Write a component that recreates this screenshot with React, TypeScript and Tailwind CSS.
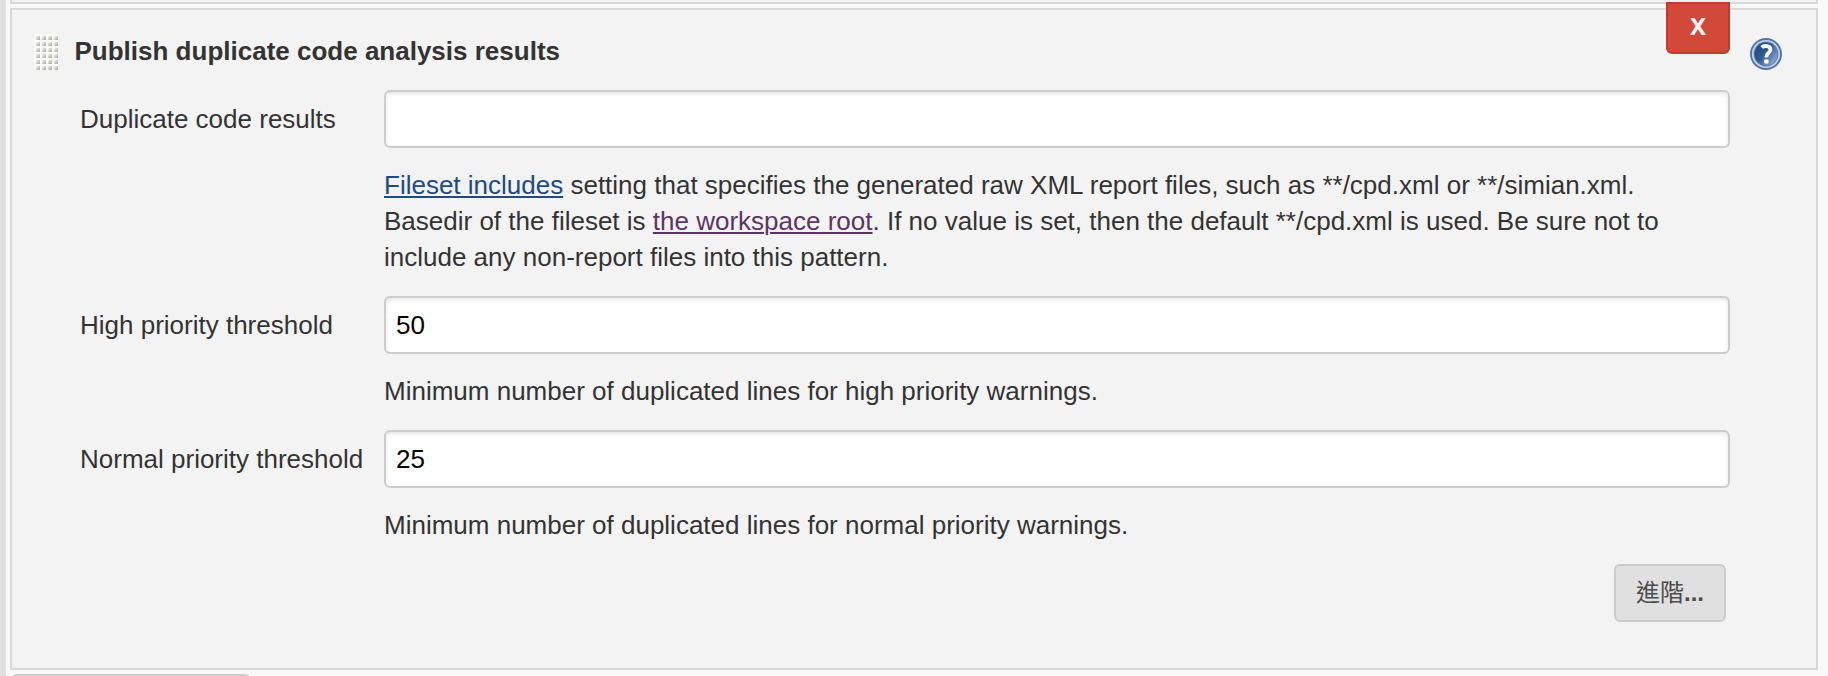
import type { ReactNode } from "react";

function DragHandle() {
  const cells = Array.from({ length: 24 }, (_, i) => ({ x: (i % 4) * 6, y: Math.floor(i / 4) * 6 }));
  return (
    <svg width="24" height="36" viewBox="0 0 24 36" className="shrink-0">
      <defs>
        <linearGradient id="grip" x1="0" y1="0" x2="1" y2="1">
          <stop offset="0.1" stopColor="#f0f0ee" />
          <stop offset="0.5" stopColor="#d0d0cb" />
          <stop offset="1" stopColor="#a8a8a1" />
        </linearGradient>
      </defs>
      <rect width="24" height="36" fill="#fbfbfb" />
      {cells.map((c) => (
        <rect key={`${c.x}-${c.y}`} x={c.x + 1.8} y={c.y + 1.8} width="4.2" height="4.2" fill="url(#grip)" />
      ))}
    </svg>
  );
}

function HelpIcon() {
  return (
    <svg width="32" height="32" viewBox="0 0 32 32">
      <defs>
        <linearGradient id="help" x1="0.1" y1="0.2" x2="0.9" y2="0.85">
          <stop offset="0" stopColor="#204a87" />
          <stop offset="0.4" stopColor="#30588f" />
          <stop offset="1" stopColor="#86a8d4" />
        </linearGradient>
      </defs>
      <circle cx="16" cy="16" r="16" fill="#5575a8" />
      <circle cx="16" cy="16" r="14.1" fill="#c3d1e6" />
      <circle cx="16" cy="16" r="12.4" fill="#5f80b0" />
      <circle cx="16" cy="16" r="11.4" fill="url(#help)" />
      <path
        d="M11.6 9.4C13.6 7.6 20.4 6.8 20.4 11.6C20.4 15.2 16.2 14.8 16.2 19.6"
        fill="none"
        stroke="#fff"
        strokeWidth="3.8"
      />
      <rect x="14.1" y="21.4" width="4.4" height="4.2" rx="0.8" fill="#fff" />
    </svg>
  );
}

function Field({ label, value, children }: { label: string; value: string; children: ReactNode }) {
  return (
    <>
      <label className="pt-[11px] leading-9">{label}</label>
      <div className="mb-[21px]">
        <input
          type="text"
          defaultValue={value}
          aria-label={label}
          className="block h-[58px] w-full rounded-[6px] border-2 border-[#ccc] bg-white px-2.5 text-[26px] text-black shadow-[inset_0_2px_4px_rgba(0,0,0,0.1)] outline-none"
        />
        <div className="mt-[19px] leading-9 whitespace-nowrap">{children}</div>
      </div>
    </>
  );
}

export default function App() {
  return (
    <div className="flex h-[676px] w-[1828px] overflow-hidden bg-[#f9f9f9] font-['Liberation_Sans','Noto_Sans_CJK_TC',sans-serif] text-[26px] text-[#333]">
      <div className="w-1.5 shrink-0 bg-[#e0e0e0]" />
      <main className="ml-1 w-[1808px]">
        <div className="h-1 border-x-2 border-b-2 border-[#d9d9d9] bg-[#f3f3f3]" />
        <section className="relative mt-1 h-[662px] border-2 border-[#d9d9d9] bg-[#f3f3f3] pt-6 pl-[22px]">
          <header className="flex h-9 gap-[16.5px]">
            <DragHandle />
            <h2 className="leading-[34px] font-bold">Publish duplicate code analysis results</h2>
          </header>
          <button className="absolute -top-2 left-[1654px] h-[52px] w-16 rounded-b-[6px] border-2 border-[#c03a2c] bg-[#d24939] pb-1 font-['Noto_Sans',sans-serif] text-[24px] leading-none font-bold text-[#f2f2f2]">
            X
          </button>
          <button aria-label="Help" className="absolute top-7 left-[1738px]">
            <HelpIcon />
          </button>
          <div className="mt-5 ml-[46px] grid grid-cols-[304px_1346px]">
            <Field label="Duplicate code results" value="">
              <a className="text-[#204a87] underline decoration-2 underline-offset-[2px]">Fileset includes</a> setting that
              specifies the generated raw XML report files, such as **/cpd.xml or **/simian.xml.
              <br />
              Basedir of the fileset is{" "}
              <a className="text-[#5c3566] underline decoration-2 underline-offset-[2px]">the workspace root</a>. If no
              value is set, then the default **/cpd.xml is used. Be sure not to
              <br />
              include any non-report files into this pattern.
            </Field>
            <Field label="High priority threshold" value="50">
              Minimum number of duplicated lines for high priority warnings.
            </Field>
            <Field label="Normal priority threshold" value="25">
              Minimum number of duplicated lines for normal priority warnings.
            </Field>
          </div>
          <div className="flex w-[1692px] justify-end">
            <button className="h-[58px] w-28 rounded-[6px] border-2 border-[#ccc] bg-[#e0e0e0] text-[24px] leading-none font-bold text-[#4d4d4d]">
              <span className="font-normal">進階</span>...
            </button>
          </div>
        </section>
        <div className="mt-1 ml-px h-[58px] w-60 rounded-[6px] border-2 border-[#ccc] bg-[#e0e0e0]" />
      </main>
    </div>
  );
}
